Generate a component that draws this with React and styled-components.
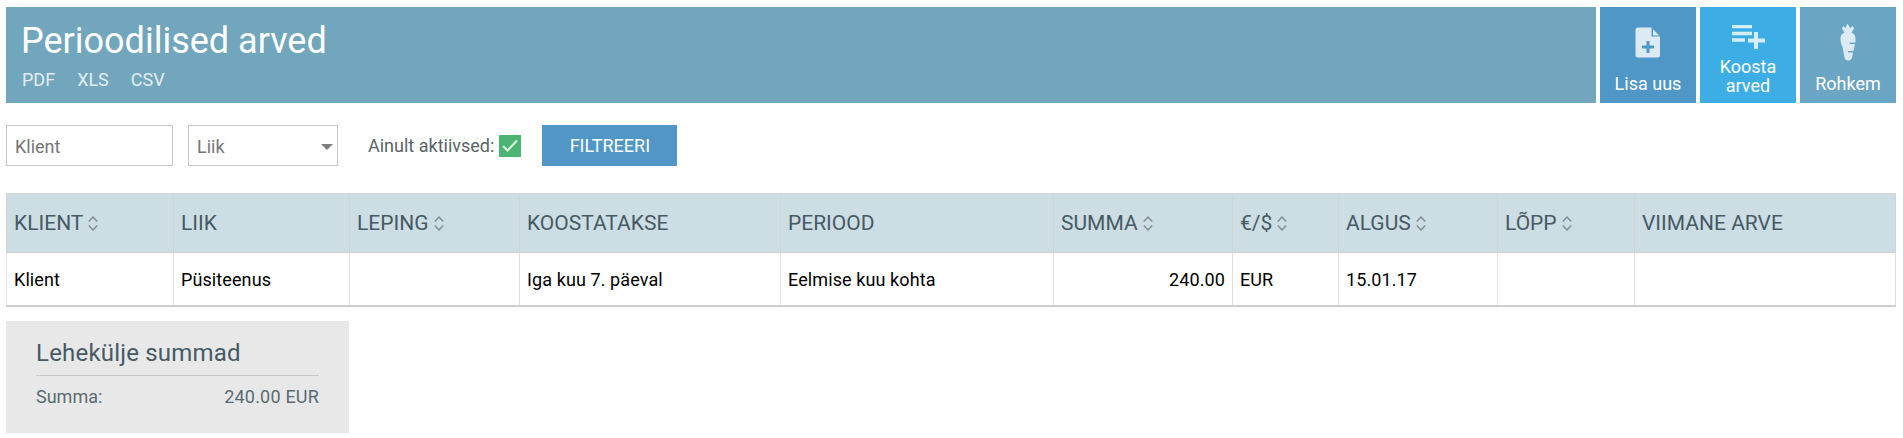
import React from "react";
import styled, { createGlobalStyle } from "styled-components";

const GlobalStyle = createGlobalStyle`
  html, body { margin: 0; padding: 0; background: #fff; }
  body { font-family: Roboto, "Liberation Sans", sans-serif; color: #455a64; }
`;

const Page = styled.div`
  padding: 7px 7px 0 6px;
`;

const Header = styled.header`
  display: flex;
  gap: 4px;
  height: 96px;
`;

const TitleBox = styled.div`
  flex: 1;
  background: #72a6bc;
  padding: 13px 16px 0 15px;
  box-sizing: border-box;
`;

const Title = styled.h1`
  margin: 0;
  font-size: 36px;
  line-height: 42px;
  font-weight: 400;
  color: #fff;
`;

const Exports = styled.div`
  display: flex;
  gap: 22px;
  margin: 7px 0 0 1px;
`;

const ExportLink = styled.a`
  font-size: 18px;
  line-height: 21px;
  color: #e3edf1;
`;

const ActionButton = styled.button`
  width: 96px;
  height: 96px;
  border: 0;
  padding: ${(p) => p.$padTop}px 0 0;
  background: ${(p) => p.$bg};
  color: #fff;
  font-family: inherit;
  font-size: 18px;
  line-height: 19px;
  display: flex;
  flex-direction: column;
  align-items: center;
  box-sizing: border-box;
`;

const IconSlot = styled.svg`
  display: block;
  flex: none;
  margin-bottom: ${(p) => p.$gap}px;
`;

const Filters = styled.form`
  display: flex;
  align-items: center;
  margin-top: 22px;
  height: 41px;
`;

const TextInput = styled.input`
  width: 167px;
  height: 41px;
  box-sizing: border-box;
  border: 1px solid #c8c8c8;
  padding: 2px 8px 0;
  font-family: inherit;
  font-size: 18px;
  outline: none;
  &::placeholder { color: #757575; opacity: 1; }
`;

const SelectBox = styled.div`
  width: 150px;
  height: 41px;
  margin-left: 15px;
  box-sizing: border-box;
  border: 1px solid #c8c8c8;
  padding: 2px 8px 0;
  display: flex;
  align-items: center;
  justify-content: space-between;
  font-size: 18px;
  color: #757575;
`;

const Caret = styled.span`
  width: 0;
  height: 0;
  margin-right: -4px;
  border-left: 6px solid transparent;
  border-right: 6px solid transparent;
  border-top: 6px solid #807c7c;
`;

const ActiveLabel = styled.label`
  margin-left: 30px;
  font-size: 18px;
  color: #5a6468;
`;

const CheckMark = styled.span`
  width: 22px;
  height: 22px;
  margin-left: 5px;
  background: #4cb573;
  display: flex;
  align-items: center;
  justify-content: center;
`;

const FilterButton = styled.button`
  width: 135px;
  height: 41px;
  margin-left: 21px;
  border: 0;
  background: #5097c8;
  color: #fff;
  font-family: inherit;
  font-size: 18px;
`;

const Table = styled.table`
  width: 1889px;
  margin-top: 27px;
  border-collapse: collapse;
  table-layout: fixed;
  border-bottom: 2px solid #cfcfcf;
`;

const HeadCell = styled.th`
  height: 58px;
  padding: 0 0 0 7px;
  background: #cddde4;
  border: 1px solid #d2d4d4;
  text-align: left;
  font-size: 21px;
  font-weight: 400;
  color: #455a64;
  white-space: nowrap;
`;

const BodyCell = styled.td`
  height: 52px;
  padding: 0 7px;
  border-left: 1px solid #e2e2e2;
  border-right: 1px solid #e2e2e2;
  text-align: ${(p) => (p.$right ? "right" : "left")};
  font-size: 18px;
  letter-spacing: 0.1px;
  color: #000;
  white-space: nowrap;
`;

const SortIcon = styled.svg`
  margin-left: 5px;
  vertical-align: -1px;
`;

const Summary = styled.section`
  width: 343px;
  height: 112px;
  margin-top: 14px;
  background: #e8e8e8;
  padding: 18px 30px 0;
  box-sizing: border-box;
`;

const SummaryTitle = styled.h2`
  margin: 0;
  padding-bottom: 8px;
  border-bottom: 1px solid #c8c8c8;
  font-size: 24px;
  line-height: 28px;
  font-weight: 400;
  letter-spacing: 0.2px;
  color: #455a64;
`;

const SummaryRow = styled.div`
  display: flex;
  justify-content: space-between;
  margin-top: 10px;
  font-size: 18px;
  line-height: 21px;
  color: #5a6b73;
`;

const SummaryValue = styled.span`
  letter-spacing: 0.2px;
`;

const columns = [
  { label: "KLIENT", width: 167, sort: true },
  { label: "LIIK", width: 176 },
  { label: "LEPING", width: 170, sort: true },
  { label: "KOOSTATAKSE", width: 261 },
  { label: "PERIOOD", width: 273 },
  { label: "SUMMA", width: 179, sort: true },
  { label: "€/$", width: 106, sort: true },
  { label: "ALGUS", width: 159, sort: true },
  { label: "LÕPP", width: 137, sort: true },
  { label: "VIIMANE ARVE", width: 261 },
];

const row = ["Klient", "Püsiteenus", "", "Iga kuu 7. päeval", "Eelmise kuu kohta", "240.00", "EUR", "15.01.17", "", ""];

function Sort() {
  return (
    <SortIcon width="10" height="15" viewBox="0 0 10 15" fill="none" stroke="#808c90" strokeWidth="1.4">
      <path d="M.8 5.5 5 1l4.2 4.5M.8 9.5 5 14l4.2-4.5" />
    </SortIcon>
  );
}

function App() {
  return (
    <Page>
      <GlobalStyle />
      <Header>
        <TitleBox>
          <Title>Perioodilised arved</Title>
          <Exports>
            <ExportLink>PDF</ExportLink>
            <ExportLink>XLS</ExportLink>
            <ExportLink>CSV</ExportLink>
          </Exports>
        </TitleBox>
        <ActionButton $bg="#4f97c7" $padTop={20}>
          <IconSlot $gap={16} width="26" height="31" viewBox="0 0 26 31">
            <path d="M3 .5h13.5L25 9.5V28a2.5 2.5 0 0 1-2.5 2.5H3A2.5 2.5 0 0 1 .5 28V3A2.5 2.5 0 0 1 3 .5Z" fill="#dceaf3" />
            <path d="M16.5.5v9H25Z" fill="#4f97c7" />
            <path d="M18 2.5v6h6Z" fill="#dceaf3" />
            <path d="M13 14v12M7 20h12" stroke="#4f97c7" strokeWidth="3" />
          </IconSlot>
          Lisa uus
        </ActionButton>
        <ActionButton $bg="#3caee5" $padTop={18}>
          <IconSlot $gap={7} width="34" height="25" viewBox="0 0 34 25">
            <path d="M1 1.5h20M1 8.5h20M1 15h13" stroke="#d6eefa" strokeWidth="3.4" />
            <path d="M25 7v17M17 15.500h17" stroke="#d6eefa" strokeWidth="4" />
          </IconSlot>
          Koosta
          <br />
          arved
        </ActionButton>
        <ActionButton $bg="#6ba5c4" $padTop={16}>
          <IconSlot $gap={13} width="16" height="38" viewBox="0 0 16 38">
            <path d="M4.500 9.500 2 5.500l1-2.500 2.500 2L7.500.5 10 5l3-2 1 2.500-2.500 4c2.500 1 4 3 4 6V19.500H9.500v1.500h5.500L13.500 28H8v1.500h5L12 34.500c-.5 4-7 4-7.500 0L2.500 24C1 21 .5 18 .5 15.500c0-3 1.500-5 4-6Z" fill="#dceaf3" />
          </IconSlot>
          Rohkem
        </ActionButton>
      </Header>

      <Filters>
        <TextInput placeholder="Klient" />
        <SelectBox>
          Liik
          <Caret />
        </SelectBox>
        <ActiveLabel>Ainult aktiivsed:</ActiveLabel>
        <CheckMark>
          <svg width="16" height="13" viewBox="0 0 16 13" fill="none" stroke="#d9f2e2" strokeWidth="2">
            <path d="M1 7l4.5 4.5L15 1.5" />
          </svg>
        </CheckMark>
        <FilterButton type="button">FILTREERI</FilterButton>
      </Filters>

      <Table>
        <colgroup>
          {columns.map((c) => (
            <col key={c.label} style={{ width: c.width }} />
          ))}
        </colgroup>
        <thead>
          <tr>
            {columns.map((c) => (
              <HeadCell key={c.label}>
                {c.label}
                {c.sort && <Sort />}
              </HeadCell>
            ))}
          </tr>
        </thead>
        <tbody>
          <tr>
            {row.map((value, i) => (
              <BodyCell key={i} $right={i === 5}>
                {value}
              </BodyCell>
            ))}
          </tr>
        </tbody>
      </Table>

      <Summary>
        <SummaryTitle>Lehekülje summad</SummaryTitle>
        <SummaryRow>
          <span>Summa:</span>
          <SummaryValue>240.00 EUR</SummaryValue>
        </SummaryRow>
      </Summary>
    </Page>
  );
}

export default App;
